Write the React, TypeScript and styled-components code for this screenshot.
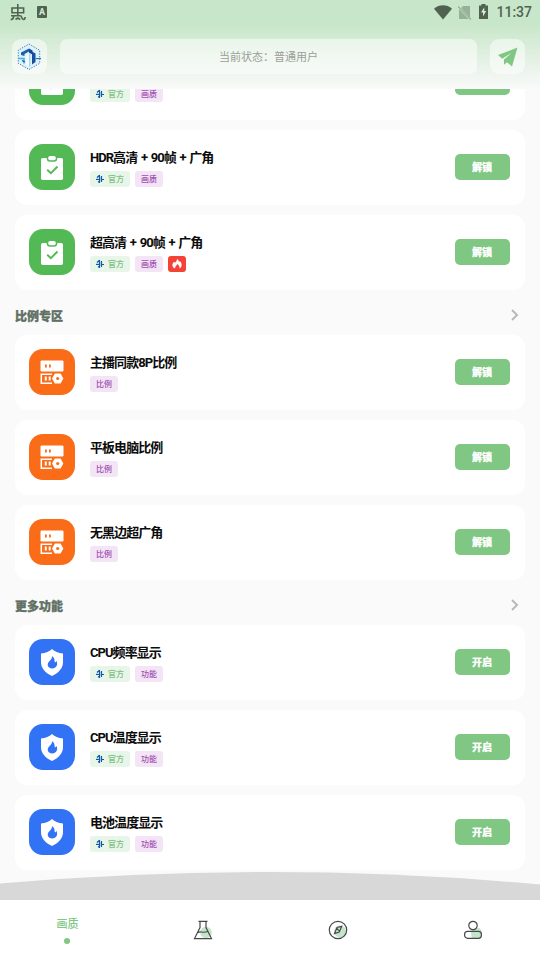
import React from "react";
import styled, { createGlobalStyle } from "styled-components";

const Global = createGlobalStyle`
  * { box-sizing: border-box; }
  body { margin: 0; background: #fafafa; font-family: Roboto, "Noto Sans CJK SC", sans-serif; }
  svg { display: block; flex: none; }
`;

const Screen = styled.div`
  width: 540px;
  height: 960px;
  display: flex;
  flex-direction: column;
  overflow: hidden;
  background: #fafafa;
`;
const Header = styled.header`
  height: 89px;
  flex: none;
  background: linear-gradient(#c8e6c9 0, #c8e6c9 24px, #fafafa 89px);
`;
const StatusBar = styled.div`
  height: 24px;
  padding: 0 8px 0 10px;
  display: flex;
  align-items: center;
  justify-content: space-between;
  color: #506351;
`;
const StatusGroup = styled.div<{ $gap: number }>`
  display: flex;
  align-items: center;
  gap: ${(p) => p.$gap}px;
`;
const Clock = styled.span`
  font: 500 14px/24px Roboto, sans-serif;
  margin-left: 2px;
`;
const TopRow = styled.div`
  display: flex;
  gap: 13px;
  padding: 15px 15px 0 12px;
`;
const Tile = styled.div`
  width: 35px;
  height: 35px;
  border-radius: 9px;
  background: rgba(255, 255, 255, 0.5);
  display: flex;
  align-items: center;
  justify-content: center;
`;
const StatusField = styled.div`
  flex: 1;
  height: 35px;
  border-radius: 7px;
  background: rgba(255, 255, 255, 0.5);
  text-align: center;
  font-size: 11px;
  line-height: 37px;
  color: #9b9f9b;
`;
const List = styled.main`
  flex: 1;
  min-height: 0;
  overflow: hidden;
`;
const Scrolled = styled.div`
  margin-top: -44px;
  padding: 0 15px;
`;
const Cards = styled.div`
  display: flex;
  flex-direction: column;
  gap: 10px;
`;
const Card = styled.div`
  height: 75px;
  border-radius: 12px;
  background: #fff;
  display: flex;
  align-items: center;
  padding: 0 15px 1px 14px;
`;
const AppIcon = styled.div<{ $color: string }>`
  width: 46px;
  height: 46px;
  border-radius: 14px;
  background: ${(p) => p.$color};
  margin-right: 15px;
  display: flex;
  align-items: center;
  justify-content: center;
`;
const Info = styled.div`
  flex: 1;
  padding-top: 2px;
`;
const Title = styled.div`
  font-size: 13px;
  font-weight: 700;
  letter-spacing: -0.95px;
  word-spacing: 1.4px;
  line-height: 17px;
  height: 17px;
  color: #0c0c0c;
  white-space: pre;
`;
const Tags = styled.div`
  display: flex;
  gap: 5px;
  margin-top: 5px;
`;
const Tag = styled.span<{ $kind: "official" | "type" | "hot" }>`
  height: 16px;
  padding: 0 ${(p) => (p.$kind === "hot" ? 4 : 6)}px;
  border-radius: 3px;
  display: flex;
  align-items: center;
  gap: 4px;
  font-size: 8px;
  line-height: 17px;
  font-weight: 500;
  color: ${(p) => (p.$kind === "official" ? "#7cbf80" : "#a04fb2")};
  background: ${(p) => ({ official: "#e8f5e9", type: "#f3e5f5", hot: "#f44336" })[p.$kind]};
`;
const Action = styled.button`
  width: 55px;
  height: 26px;
  border: 0;
  padding: 0 1px 0 0;
  border-radius: 5px;
  background: #81c784;
  color: #fff;
  font: 900 10px/26px "Noto Sans CJK SC", sans-serif;
  -webkit-text-stroke: 0.2px #fff;
`;
const SectionHead = styled.div`
  height: 45px;
  padding: 5px 6px 0 0;
  display: flex;
  align-items: center;
  justify-content: space-between;
`;
const SectionTitle = styled.h2`
  margin: 0;
  padding-top: 2px;
  font: 900 12px/18px "Noto Sans CJK SC", sans-serif;
  color: #607064;
  -webkit-text-stroke: 0.3px #607064;
`;
const Arc = styled.svg`
  position: relative;
  margin-top: -28px;
`;
const Nav = styled.nav`
  height: 60px;
  flex: none;
  background: #fff;
  display: grid;
  grid-template-columns: repeat(4, 1fr);
`;
const NavItem = styled.div`
  display: flex;
  flex-direction: column;
  align-items: center;
  justify-content: center;
  padding-bottom: 1px;
`;
const NavLabel = styled.span`
  font-size: 11px;
  line-height: 16px;
  font-weight: 500;
  color: #81c784;
  padding-top: 3px;
`;
const Dot = styled.i`
  width: 6px;
  height: 6px;
  border-radius: 50%;
  background: #81c784;
  margin: 5px 1px 1px 0;
`;

const Clipboard = () => (
  <svg width="22" height="25" viewBox="0 0 22 25">
    <rect y="3" width="22" height="22" rx="1.8" fill="#fff" />
    <rect x="6.4" y="0.2" width="9.2" height="5.8" rx="2.8" fill="#fff" stroke="#52b955" strokeWidth="1.5" />
    <path d="M6.2 14.7l3.7 3.5 6.6-6.7" fill="none" stroke="#52b955" strokeWidth="1.9" />
  </svg>
);
const Server = () => (
  <svg width="24" height="26" viewBox="0 0 24 26">
    <rect x="0.5" y="1.5" width="23" height="11" rx="1.2" fill="#fff" />
    <path d="M5 5.500h1.800v3H5zM9 5.500h1.800v3H9z" fill="#fa6c18" />
    <path d="M12 15.200H1.300v9H12" fill="none" stroke="#fff" strokeWidth="1.500" />
    <path d="M4.800 17.500h2v4h-2zM8.700 17.500h2v4h-2z" fill="#fff" />
    <path d="M15.200 15h5l2.500 4.500-2.500 4.500h-5l-2.500-4.500z" fill="#fff" stroke="#fff" strokeLinejoin="round" strokeWidth="1.200" />
    <circle cx="17.700" cy="19.500" r="1.600" fill="#fa6c18" />
  </svg>
);
const Shield = () => (
  <svg width="22" height="27" viewBox="0 0 22 27">
    <path d="M11 0c2.700 2.500 6.200 3.900 11 4.600V13c0 6.700-4.600 10.800-11 14C4.600 23.800 0 19.700 0 13V4.600C4.800 3.900 8.300 2.500 11 0z" fill="#fff" />
    <path d="M11.200 7.300c3.200 2 1.900 5.200 2.900 6.200.7-.3 1.100-1 1.200-1.700 2.200 3.700 0 7.700-4.100 7.700-4.200 0-5.600-3.700-3.500-6.400 1.500-1.900 3.400-3.200 3.500-5.800z" fill="#3273f6" />
  </svg>
);
const MiniLogo = () => (
  <svg width="8" height="10" viewBox="0 0 8 10">
    <path d="M3.500 1.300L1 3.500M0 5.500h3M3.500 1v8M5.500 2v6M5.500 5.500H8M2 7.500l1.500 1" fill="none" stroke="#1457a4" strokeWidth="1.150" />
    <path d="M0 4.300h2.500M4.500 3v4" stroke="#7bb9e5" strokeWidth=".6" />
  </svg>
);
const Flame = () => (
  <svg width="10" height="10" viewBox="0 0 10 10">
    <path d="M5 0c1.800 1 1.700 2.200 2 3 .5-.2.700-.5.800-.9C9.200 3.300 10 5 9.500 7c-.3 1.300-1 2-2 2.500.3-2-.7-3.500-2.300-4.500C5 6.500 3 7.200 3 9.600 1.500 9 .4 7.800.4 6c0-1.700 1-2.700 2-3.300l.6 1C4.200 2.800 4.900 1.600 5 0z" fill="#fff" />
  </svg>
);
const Logo = () => (
  <svg width="25" height="28" viewBox="0 0 25 28">
    <path d="M12 1L22.700 7.200v13.100L12 26.500 1.300 20.300V7.200z" fill="#dff1fa" stroke="#3a80bb" strokeDasharray="1.300 1.300" />
    <path d="M4 9.500L12 5.500v3L7.500 11v2L4 12z" fill="#1861ae" />
    <path d="M12 5.500l3.500 2v4L12 9.700z" fill="#134891" />
    <path d="M1 15.600h6v5" fill="none" stroke="#4baee2" strokeWidth="1.500" />
    <path d="M5 17.500l2.800 1.300" stroke="#185fae" strokeWidth="1.300" />
    <path d="M8.500 12l3.500-1.500v13l-3-1.800z" fill="#f3fbff" />
    <path d="M12.700 10.500v13" stroke="#a4d7ef" strokeWidth="1.400" />
    <path d="M15 8.500l3.500 2v8.500L15 21.500z" fill="#164d9c" />
    <path d="M18.500 15.600H24" stroke="#246eac" strokeWidth="1.100" />
  </svg>
);
const Plane = () => (
  <svg width="20" height="20" viewBox="0 0 20 20">
    <path d="M19.500.5L0 8l4.200 3.700L13.300 6 6 12.500v5.300l3-2.600 5 4.300z" fill="#81c784" />
  </svg>
);
const Chevron = () => (
  <svg width="8" height="12" viewBox="0 0 8 12">
    <path d="M1 1l5 5-5 5" fill="none" stroke="#b9b9b9" strokeWidth="2" />
  </svg>
);
const BugMark = () => (
  <svg width="16" height="17" viewBox="0 0 16 17">
    <path d="M7.800 0v12M2 4h11.600v4.800H2zM1 11.800h9.200c1.900 0 1.200 3.700 3.200 3.700 1.200 0 1.700-1 1.700-2.500M3.700 12c0 2-1.200 3.500-3 3.800M5.500 15.500l2.300-1.500 2.500 1.500" fill="none" stroke="#506351" strokeWidth="1.600" />
  </svg>
);
const LetterBadge = styled.span`
  width: 10px;
  height: 12px;
  border-radius: 1px;
  background: #506351;
  color: #d7ecd8;
  font: 700 9px/12px Roboto, sans-serif;
  text-align: center;
`;
const Wifi = () => (
  <svg width="18" height="15" viewBox="0 0 18 15">
    <path d="M0 3.700C5-.8 13-.8 18 3.700L9 14.500z" fill="#506351" />
  </svg>
);
const NoSim = () => (
  <svg width="14" height="15" viewBox="0 0 14 15">
    <path d="M5 1h7v11.500L3 3zM1 4l9.800 10H1z" fill="#97b199" />
    <path d="M0 1.500l13 13" stroke="#97b199" strokeWidth="1.200" />
  </svg>
);
const BatterySvg = styled.svg`
  margin: -2px 0 0 1px;
`;
const Battery = () => (
  <BatterySvg width="9" height="15" viewBox="0 0 9 15">
    <path d="M2.500 0h4v1.500H9V15H0V1.500h2.500z" fill="#506351" />
    <path d="M5.300 3.200L2 8.500h2v4L7.200 7H5.300z" fill="#d7ecd8" />
  </BatterySvg>
);
const Flask = () => (
  <svg width="20" height="20" viewBox="0 0 20 20">
    <circle cx="13" cy="12.500" r="5.800" fill="#c4e4cb" />
    <path d="M5.500 1.400h9M7 1.500v6L1.500 18.600h17L13 7.500v-6M5 12.500c3-2 4.200 1.200 9.500-1" fill="none" stroke="#484848" strokeWidth="1.200" />
  </svg>
);
const Compass = () => (
  <svg width="20" height="20" viewBox="0 0 20 20">
    <circle cx="12" cy="11.500" r="5.900" fill="#c4e4cb" />
    <circle cx="10" cy="10" r="8.700" fill="none" stroke="#484848" strokeWidth="1.200" />
    <path d="M13.800 6.200L9 7.500l-2.500 6 4.800-1.500zM8.700 8l3 3.500" fill="none" stroke="#484848" strokeWidth="1.100" />
  </svg>
);
const User = () => (
  <svg width="20" height="20" viewBox="0 0 20 20">
    <path d="M8 12c0-2 2-3 5-4 3-1.300 6 1 6 4.500 0 3-1.800 5.500-5 5.500H9c-1.500-2 0-4-1-6z" fill="#c4e4cb" />
    <circle cx="10" cy="5.500" r="4.200" fill="#fff" stroke="#484848" strokeWidth="1.200" />
    <rect x="1.600" y="11.300" width="16.800" height="7" rx="3" fill="none" stroke="#484848" strokeWidth="1.200" />
  </svg>
);

type Kind = "quality" | "ratio" | "tool";
const kinds = {
  quality: { color: "#52b955", icon: <Clipboard />, tag: "画质", action: "解锁", official: true },
  ratio: { color: "#fa6c18", icon: <Server />, tag: "比例", action: "解锁", official: false },
  tool: { color: "#3273f6", icon: <Shield />, tag: "功能", action: "开启", official: true },
};

const Row = ({ title, kind, hot, hideAction }: { title: string; kind: Kind; hot?: boolean; hideAction?: boolean }) => {
  const k = kinds[kind];
  return (
    <Card>
      <AppIcon $color={k.color}>{k.icon}</AppIcon>
      <Info>
        <Title>{title}</Title>
        <Tags>
          {k.official && <Tag $kind="official"><MiniLogo />官方</Tag>}
          <Tag $kind="type">{k.tag}</Tag>
          {hot && <Tag $kind="hot"><Flame /></Tag>}
        </Tags>
      </Info>
      <Action>{!hideAction && k.action}</Action>
    </Card>
  );
};
const Section = ({ title }: { title: string }) => (
  <SectionHead>
    <SectionTitle>{title}</SectionTitle>
    <Chevron />
  </SectionHead>
);

export default function App() {
  return (
    <Screen>
      <Global />
      <Header>
        <StatusBar>
          <StatusGroup $gap={11}><BugMark /><LetterBadge>A</LetterBadge></StatusGroup>
          <StatusGroup $gap={6}><Wifi /><NoSim /><Battery /><Clock>11:37</Clock></StatusGroup>
        </StatusBar>
        <TopRow>
          <Tile><Logo /></Tile>
          <StatusField>当前状态：普通用户</StatusField>
          <Tile><Plane /></Tile>
        </TopRow>
      </Header>
      <List>
        <Scrolled>
          <Cards>
            <Row title="" kind="quality" hideAction />
            <Row title="HDR高清 + 90帧 + 广角" kind="quality" />
            <Row title="超高清 + 90帧 + 广角" kind="quality" hot />
          </Cards>
          <Section title="比例专区" />
          <Cards>
            <Row title="主播同款8P比例" kind="ratio" />
            <Row title="平板电脑比例" kind="ratio" />
            <Row title="无黑边超广角" kind="ratio" />
          </Cards>
          <Section title="更多功能" />
          <Cards>
            <Row title="CPU频率显示" kind="tool" />
            <Row title="CPU温度显示" kind="tool" />
            <Row title="电池温度显示" kind="tool" />
          </Cards>
        </Scrolled>
      </List>
      <Arc width="540" height="28" viewBox="0 0 540 28">
        <path d="M0 11.500Q135 0 270 0T540 12.500V28H0z" fill="#d8d8d8" />
      </Arc>
      <Nav>
        <NavItem><NavLabel>画质</NavLabel><Dot /></NavItem>
        <NavItem><Flask /></NavItem>
        <NavItem><Compass /></NavItem>
        <NavItem><User /></NavItem>
      </Nav>
    </Screen>
  );
}
